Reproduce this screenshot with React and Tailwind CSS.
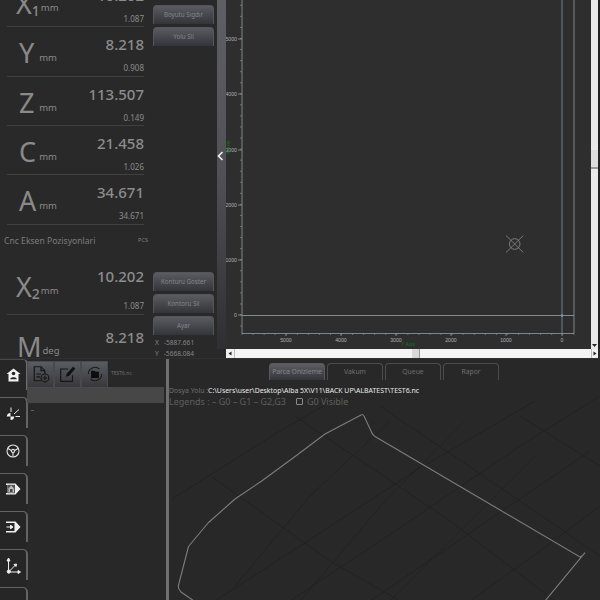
const font = { fontFamily: '"Noto Sans", sans-serif' };
const tickFont = { fontFamily: '"Liberation Sans", sans-serif' };

function Axis({ letter, sub, unit = "mm", value, delta, last, letterPad = "pt-[8px]", valueTop = "mt-[4px]", deltaTop = "mt-[4px]" }) {
  return (
    <div className={`relative h-[49.35px] shrink-0 ${last ? "" : "border-b border-[#404040]"}`}>
      <div className="flex h-full items-start justify-between">
        <div className={`flex w-[50px] items-baseline leading-none text-[#8a8a8a] ${letterPad}`}>
          <span className={`text-[27px] leading-[36px] ${sub ? "ml-[9px]" : letter === "M" ? "ml-[10px]" : "ml-[12px] w-[22px]"}`}>{letter}</span>
          {sub && <span className="relative top-[2px] text-[14px] font-medium leading-none">{sub}</span>}
          <span className={`relative ml-[1px] text-[9.5px] leading-none ${sub || letter === "M" ? "-top-[3px]" : "-top-[2px]"}`}>{unit}</span>
        </div>
        <div className="flex flex-col items-end text-[#8c8c8c]">
          <span className={`text-[15px] font-medium leading-[26px] ${valueTop}`}>{value}</span>
          <span className={`text-[8px] leading-[14px] ${deltaTop}`}>{delta}</span>
        </div>
      </div>
    </div>
  );
}

function Btn({ children }) {
  return (
    <div className="flex h-[19px] w-[61px] items-center justify-center rounded-t-[4px] border-x border-t border-[#55555a] bg-gradient-to-b from-[#5b5c62] to-[#34353a] text-[6.2px] text-[#85858a]">
      {children}
    </div>
  );
}

function Chart() {
  const yt = [];
  for (let y = 315 - 55.3 * 6; y < 333; y += 11.06) if (y >= 0) yt.push(y);
  const xt = [];
  for (let x = 242; x < 574; x += 11.06) xt.push(x);
  const ylabs = [[39, "5000"], [94, "4000"], [150, "3000"], [205, "2000"], [260, "1000"], [315, "0"]];
  const xlabs = [[286, "5000"], [341, "4000"], [396, "3000"], [451, "2000"], [506, "1000"], [562, "0"]];
  return (
    <svg width="365" height="349" viewBox="226 0 365 349" className="block" style={tickFont}>
      <path d="M242 0V333.5H574V0" fill="none" stroke="#7f8488" strokeWidth="1" />
      {yt.map((y, i) => <line key={i} x1="240" x2="242" y1={y} y2={y} stroke="#8a8a8a" strokeWidth="0.7" />)}
      {xt.map((x, i) => <line key={i} x1={x} x2={x} y1="333" y2="335" stroke="#8a8a8a" strokeWidth="0.7" />)}
      {ylabs.map(([y, t]) => <line key={t} x1="238" x2="242" y1={y} y2={y} stroke="#9a9a9a" strokeWidth="0.8" />)}
      {xlabs.map(([x, t]) => <line key={t} x1={x} x2={x} y1="333" y2="336" stroke="#9a9a9a" strokeWidth="0.8" />)}
      <line x1="562" x2="562" y1="0" y2="333" stroke="#64747e" strokeWidth="1.2" />
      <line x1="242" x2="574" y1="315.5" y2="315.5" stroke="#7f8c92" strokeWidth="1" />
      <circle cx="562" cy="315.5" r="1.3" fill="#7f9aa8" />
      {ylabs.map(([y, t]) => <text key={t} x="237" y={y + 2} textAnchor="end" fontSize="5.2" fill="#aab2ba">{t}</text>)}
      {xlabs.map(([x, t]) => <text key={t} x={x} y="342" textAnchor="middle" fontSize="5.2" fill="#aab2ba">{t}</text>)}
      <text x="408" y="346" textAnchor="middle" fontSize="5" fill="#0f7a12">Y Axis</text>
      <text x="0" y="0" fontSize="5" fill="#0f7a12" textAnchor="middle" transform="translate(230 147.5) rotate(-90)">X Axis</text>
      <g stroke="#8b8b8b" fill="none" strokeWidth="0.8">
        <circle cx="514.7" cy="244" r="5.3" />
        <path d="M506 235.5L523.3 252.5M523.3 235.5L506 252.5" />
      </g>
    </svg>
  );
}

function ToolBtn({ children }) {
  return (
    <div className="flex h-[27px] w-[27px] items-center justify-center border border-[#4a4a4e] bg-gradient-to-b from-[#5b5c62] to-[#38383c]">
      {children}
    </div>
  );
}

const navIcons = [
  <svg key="h" width="15" height="14" viewBox="0 0 15 14" fill="#f2f2f2"><path d="M7.5 0.5L14.5 6H12.5V13.5H2.5V6H0.5Z" /><circle cx="7.5" cy="5.5" r="1.8" fill="#262626" /><path d="M4.2 11.2C4.5 8.6 10.5 8.6 10.8 11.2Z" fill="#262626" /></svg>,
  <svg key="t" width="15" height="15" viewBox="0 0 15 15" fill="none"><circle cx="4.5" cy="10.5" r="3.6" fill="#f2f2f2" /><path d="M4.5 10.5H8V8.2A3.6 3.6 0 0 0 4.5 7ZM4.5 10.5H1V13A3.6 3.6 0 0 0 4.5 14Z" fill="#222" /><path d="M5 6V1.5M8 8L13 3.5M9.5 10.5H14" stroke="#e8e8e8" strokeWidth="1" /></svg>,
  <svg key="w" width="14" height="14" viewBox="0 0 14 14" fill="none" stroke="#e4e4e4" strokeWidth="1.1"><circle cx="7" cy="7" r="6" /><path d="M2 4.5L7 7.5L12 4.5M7 7.5V12.8" /><circle cx="7" cy="7" r="1.6" fill="#2a2a2a" /></svg>,
  <svg key="d" width="16" height="14" viewBox="0 0 16 14"><path d="M1 1.5H10.5L15.5 7L10.5 12.5H1V11H2.5V3H1Z" fill="#f0f0f0" /><rect x="2.5" y="2.8" width="7.5" height="8.4" fill="#555" /><path d="M6.2 3.6L9 6.5V10.5H3.5V6.5Z" fill="#bdbdbd" /><rect x="5" y="7" width="2.5" height="3" fill="#444" /></svg>,
  <svg key="e" width="16" height="14" viewBox="0 0 16 14"><path d="M1 1.5H10.5L15.5 7L10.5 12.5H1V11H9.5V3H1Z" fill="#f0f0f0" /><path d="M1.5 7H7M5.5 5.2L8 7L5.5 8.8Z" stroke="#f0f0f0" strokeWidth="1" fill="#f0f0f0" /></svg>,
  <svg key="a" width="15" height="17" viewBox="0 0 15 17" fill="none" stroke="#ececec" strokeWidth="1"><path d="M2.5 15V2M1 4L2.5 1L4 4Z" fill="#ececec" /><path d="M2.5 15H13.5M12 13.5L14.5 15L12 16.5Z" fill="#ececec" /><path d="M2.5 15L10 7.5M8 7.5L10.5 7L10 9.5Z" fill="#ececec" /><circle cx="2.8" cy="14.6" r="1.6" fill="#ececec" /></svg>,
  <svg key="m" width="15" height="8" viewBox="0 0 15 8" fill="#d8d8d8"><path d="M0.5 1H4.5V3.5L2.5 6.5L0.5 3.5ZM5.5 1H9.5V3.5L7.5 6.5L5.5 3.5ZM10.5 1H14.5V3.5L12.5 6.5L10.5 3.5Z" /><path d="M2 2H3.2V3.2H2ZM7 2H8.2V3.2H7ZM12 2H13.2V3.2H12Z" fill="#444" /></svg>,
];

function NavTab({ icon, active }) {
  return (
    <div className="h-[38px] w-[28px] shrink-0">
      <div className={`flex h-[31px] w-[28px] items-center justify-center rounded-tr-[5px] border-t border-r-2 ${active ? "border-[#6e6e6e] border-t-[#4a4a4a]" : "border-[#636363]"}`}>
        {icon}
      </div>
    </div>
  );
}

function Tab({ children, active }) {
  return (
    <div className={`flex h-[17px] w-[56px] items-center justify-center rounded-t-[4px] border-x border-t text-[6.8px] ${active ? "border-[#5a5a5e] bg-gradient-to-b from-[#5e5f65] to-[#343539] text-[#85858a]" : "border-[#4c4c4c] text-[#6f6f6f]"}`}>
      {children}
    </div>
  );
}

function Preview() {
  const grid = [
    "M215 600L300 545L415 470L535 400", "M290 600L410 520L520 445L600 395", "M370 600L480 525L590 450",
    "M172 498L280 430L370 378", "M470 600L540 550L600 505",
    "M212 476L330 560L400 600", "M295 415L450 520L555 600", "M380 405L520 500L600 555",
    "M520 415L600 465",
    "M535 455L455 535L405 585L390 600", "M465 420L385 500L300 600", "M390 420L310 495L235 585",
  ];
  return (
    <svg width="431" height="204" viewBox="169 396 431 204" className="absolute left-0 top-[38px]" >
      {grid.map((d, i) => <path key={i} d={d} fill="none" stroke="#212121" strokeWidth="0.8" />)}
      <path d="M361.5 413.7L325 433L291.7 458L261.7 480L235 498L208 522L188.5 545.5L178.3 585Q178 588 181 591L194 600" fill="none" stroke="#7d7d7d" strokeWidth="1.1" strokeLinejoin="round" />
      <path d="M361.5 413.7Q362.5 413 364 415L371.5 431Q372.5 434 375 435.5L580 556Q583 555 585 551.7L545 600" fill="none" stroke="#7d7d7d" strokeWidth="1.1" />
    </svg>
  );
}

export default function App() {
  return (
    <div className="flex h-[600px] w-[600px] flex-col overflow-hidden bg-[#292929]" style={font}>
      <div className="flex h-[358px] shrink-0 overflow-hidden">
        <div className="flex h-[358px] w-[217px] shrink-0 bg-[#292929]">
          <div className="w-[153px] shrink-0 overflow-hidden">
            <div className="-mt-[22px] ml-[7px] w-[137px]">
              <Axis letter="X" sub="1" value="10.202" delta="1.087" />
              <Axis letter="Y" value="8.218" delta="0.908" />
              <Axis letter="Z" value="113.507" delta="0.149" />
              <Axis letter="C" value="21.458" delta="1.026" />
              <Axis letter="A" value="34.671" delta="34.671" />
            </div>
            <div className="mt-[9px] ml-[4px] flex w-[144px] items-center justify-between text-[#80808a]">
              <span className="text-[8.6px] leading-[14px] text-[#7d7d7d]">Cnc Eksen Pozisyonlari</span>
              <span className="text-[5.6px] leading-none">PCS</span>
            </div>
            <div className="mt-[18px] ml-[7px] w-[137px]">
              <Axis letter="X" sub="2" value="10.202" delta="1.087" letterPad="pt-[3px]" valueTop="-mt-[3px]" deltaTop="mt-[10.5px]" />
              <Axis letter="M" unit="deg" value="8.218" delta="" last letterPad="pt-[14px]" valueTop="mt-[8.5px]" />
            </div>
          </div>
          <div className="flex w-[64px] flex-col">
            <div className="mt-[5px] flex flex-col gap-[3px]">
              <Btn>Boyutu Sıgdır</Btn>
              <Btn>Yolu Sil</Btn>
            </div>
            <div className="mt-[226px] flex flex-col gap-[3px]">
              <Btn>Konturu Goster</Btn>
              <Btn>Kontoru Sil</Btn>
              <Btn>Ayar</Btn>
            </div>
            <div className="ml-[2px] mt-[2px] text-[6.6px] leading-[11px] text-[#85858a]">
              <div className="flex gap-[5px]"><span>X</span><span>-5887.661</span></div>
              <div className="flex gap-[5px]"><span>Y</span><span>-5668.084</span></div>
            </div>
          </div>
        </div>
        <div className="flex h-[349px] w-[9px] shrink-0 items-center justify-center bg-gradient-to-b from-[#5f5f66] via-[#505056] to-[#2f2f33] pb-[38px]">
          <svg width="7" height="10" viewBox="0 0 7 10" fill="none" className="-ml-[2px]"><path d="M5.5 1L1.5 5L5.5 9" stroke="#f4f4f4" strokeWidth="1.6" /></svg>
        </div>
        <div className="flex w-[374px] shrink-0 flex-col">
          <div className="flex h-[349px]">
            <div className="w-[365px] bg-[#2e2e2e]"><Chart /></div>
            <div className="relative w-[7px] bg-[#e9e9e9]">
              <div className="mt-[150px] h-[19px] border-b-2 border-[#9a9a9a] bg-[#dcdcdc]" />
              <svg width="7" height="5" viewBox="0 0 7 5" className="absolute bottom-[1px] left-0"><path d="M1 1H6L3.5 4Z" fill="#222" /></svg>
            </div>
            <div className="w-[2px] bg-[#222]" />
          </div>
          <div className="flex h-[9px] w-[372px] items-stretch bg-[#f1f1f1]">
            <div className="flex w-[9px] items-center justify-center border-r border-[#bbb]">
              <svg width="4" height="5" viewBox="0 0 4 5"><path d="M3.5 0.5V4.5L0.5 2.5Z" fill="#222" /></svg>
            </div>
            <div className="w-[177px] bg-[#f4f4f4]" />
            <div className="w-[8px] border-r border-[#999] bg-[#d8d8d8]" />
            <div className="flex-1 bg-[#f4f4f4]" />
            <div className="flex w-[7px] items-center justify-center border-l border-[#bbb]">
              <svg width="4" height="5" viewBox="0 0 4 5"><path d="M0.5 0.5V4.5L3.5 2.5Z" fill="#222" /></svg>
            </div>
          </div>
        </div>
      </div>
      <div className="flex h-[242px] shrink-0 border-t border-[#2f2f2f] bg-[#282828]">
        <div className="flex w-[27px] shrink-0 flex-col bg-[#262626]">
          {navIcons.map((ic, i) => <NavTab key={i} icon={ic} active={i === 0} />)}
        </div>
        <div className="w-[137px] shrink-0">
          <div className="flex h-[28px] items-center gap-[0px] pt-[2px]">
            <ToolBtn>
              <svg width="18" height="18" viewBox="0 0 16 16" fill="none" stroke="#161616" strokeWidth="1"><path d="M8 14H2V1.5H8L11.5 5V8M8 1.5V5H11.5M4 8H8M4 10.5H7" /><circle cx="11.5" cy="11.5" r="3.5" /><path d="M11.5 9.5V13.5M9.5 11.5H13.5" /></svg>
            </ToolBtn>
            <ToolBtn>
              <svg width="18" height="18" viewBox="0 0 16 16" fill="none"><path d="M12 9V14.5H1.5V3.5H8" stroke="#161616" strokeWidth="1" /><path d="M6 10.5L7 7.5L12.5 1.5L14.5 3L9 9.5Z" fill="#101010" /></svg>
            </ToolBtn>
            <ToolBtn>
              <svg width="20" height="20" viewBox="0 0 18 18" fill="none"><path d="M3 9A6 6 0 0 1 13 4.5M15 9A6 6 0 0 1 5 13.5" stroke="#1c1c1c" strokeWidth="1" /><path d="M5.5 6H8.5L9.5 7H12.5V12.5H5.5Z" fill="#0c0c0c" /></svg>
            </ToolBtn>
            <span className="ml-[3px] text-[5px] text-[#707074]">TEST6.nc</span>
          </div>
          <div className="h-[16px] bg-[#474747]" />
          <div className="ml-[4px] mt-[7px] h-[1px] w-[3px] bg-[#5f5f5f]" />
        </div>
        <div className="relative min-w-0 flex-1">
          <div className="ml-[2px] h-full w-[3px] bg-[#6f6f6f]" />
          <div className="absolute inset-0 left-[5px] overflow-hidden">
            <Preview />
            <div className="relative flex gap-[2px] pl-[100px] pt-[4px]">
              <Tab active>Parca Onizleme</Tab>
              <Tab>Vakum</Tab>
              <Tab>Queue</Tab>
              <Tab>Rapor</Tab>
            </div>
            <div className="relative whitespace-nowrap pt-[5px] text-[6.9px] leading-[11px] text-[#6e6e6e]">
              Dosya Yolu :<span className="text-[#e8e8e8]">C:\Users\user\Desktop\Alba 5X\V11\BACK UP\ALBATEST\TEST6.nc</span>
            </div>
            <div className="relative flex items-center whitespace-nowrap text-[9px] leading-[11px] text-[#5f5f5f]">
              <span>Legends : – G0 – G1 – G2,G3</span>
              <span className="ml-[10px] h-[7px] w-[7px] rounded-[1px] border border-[#8a8a8a]" />
              <span className="ml-[4px]">G0 Visible</span>
            </div>
          </div>
        </div>
      </div>
    </div>
  );
}
